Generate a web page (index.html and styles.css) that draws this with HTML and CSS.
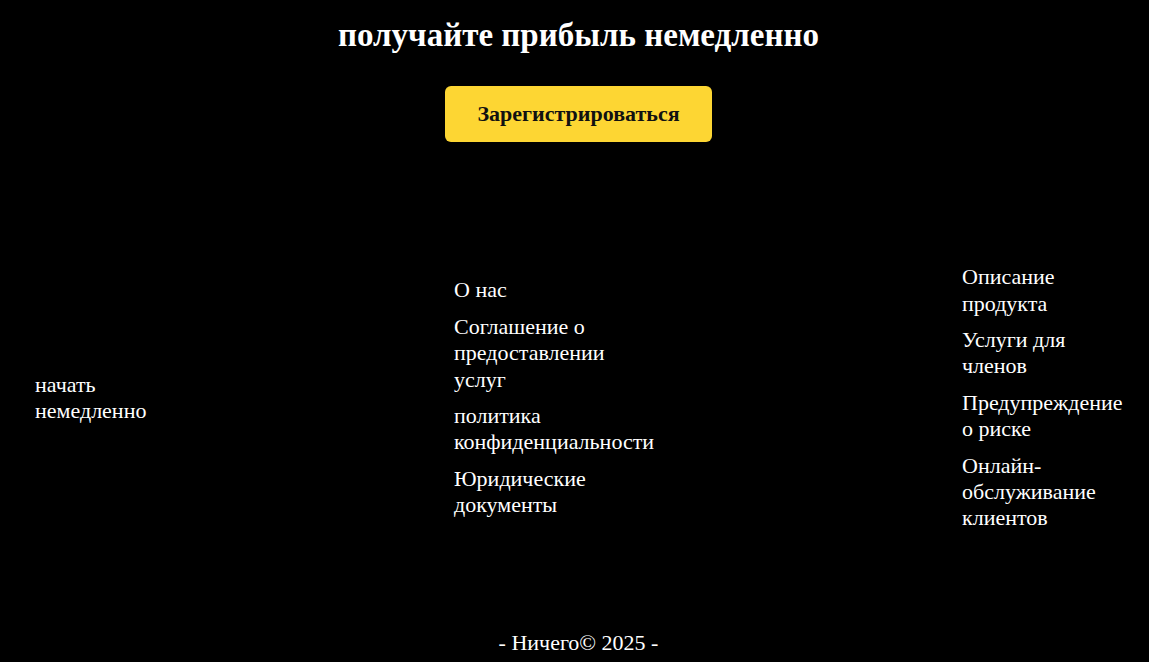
FILE: index.html
```html
<!DOCTYPE html>
<html lang="ru">
<head>
<meta charset="utf-8">
<title>получайте прибыль немедленно</title>
<link rel="stylesheet" href="styles.css">
</head>
<body>
<header class="hero">
  <h1 class="hero-title">получайте прибыль немедленно</h1>
  <a class="btn-register" href="#">Зарегистрироваться</a>
</header>
<main class="links">
  <div class="col col-start">
    <div class="col-inner w1">
      <a class="link" href="#">начать немедленно</a>
    </div>
  </div>
  <div class="col col-mid">
    <ul class="col-inner w2">
      <li><a class="link" href="#">О нас</a></li>
      <li><a class="link" href="#">Соглашение о предоставлении услуг</a></li>
      <li><a class="link" href="#">политика конфиденциальности</a></li>
      <li><a class="link" href="#">Юридические документы</a></li>
    </ul>
  </div>
  <div class="col col-end">
    <ul class="col-inner w3">
      <li><a class="link" href="#">Описание продукта</a></li>
      <li><a class="link" href="#">Услуги для членов</a></li>
      <li><a class="link" href="#">Предупреждение о риске</a></li>
      <li><a class="link" href="#">Онлайн-обслуживание клиентов</a></li>
    </ul>
  </div>
</main>
<footer class="footer">- Ничего© 2025 -</footer>
</body>
</html>
```
FILE: styles.css
```css
html, body {
  margin: 0;
  padding: 0;
  background: #000;
  color: #fff;
  font-family: "Liberation Serif", "Times New Roman", serif;
}
body {
  height: 662px;
  overflow: hidden;
}
.hero {
  display: flex;
  flex-direction: column;
  align-items: center;
  padding: 16px 0 0 8px;
}
.hero-title {
  margin: 0;
  font-size: 33px;
  line-height: 38px;
  font-weight: bold;
}
.btn-register {
  margin-top: 32px;
  width: 267px;
  height: 56px;
  box-sizing: border-box;
  display: flex;
  align-items: center;
  justify-content: center;
  background: #fdd633;
  color: #111;
  border-radius: 6px;
  font-size: 22px;
  font-weight: bold;
  text-decoration: none;
}
.links {
  display: flex;
  align-items: center;
  margin-top: 23px;
  height: 466px;
  padding-left: 35px;
}
.col-start { width: 419px; }
.col-mid { width: 508px; }
.col-end { flex: 1; }
.col-inner {
  margin: 0;
  padding: 0;
  list-style: none;
  display: flex;
  flex-direction: column;
  gap: 10px;
}
.w1 { width: 140px; }
.w2 { width: 204px; }
.w3 { width: 166px; }
.link {
  color: #fff;
  text-decoration: none;
  font-size: 22px;
  line-height: 26.4px;
}
.footer {
  padding-left: 8px;
  text-align: center;
  font-size: 22px;
  line-height: 24px;
}
```
